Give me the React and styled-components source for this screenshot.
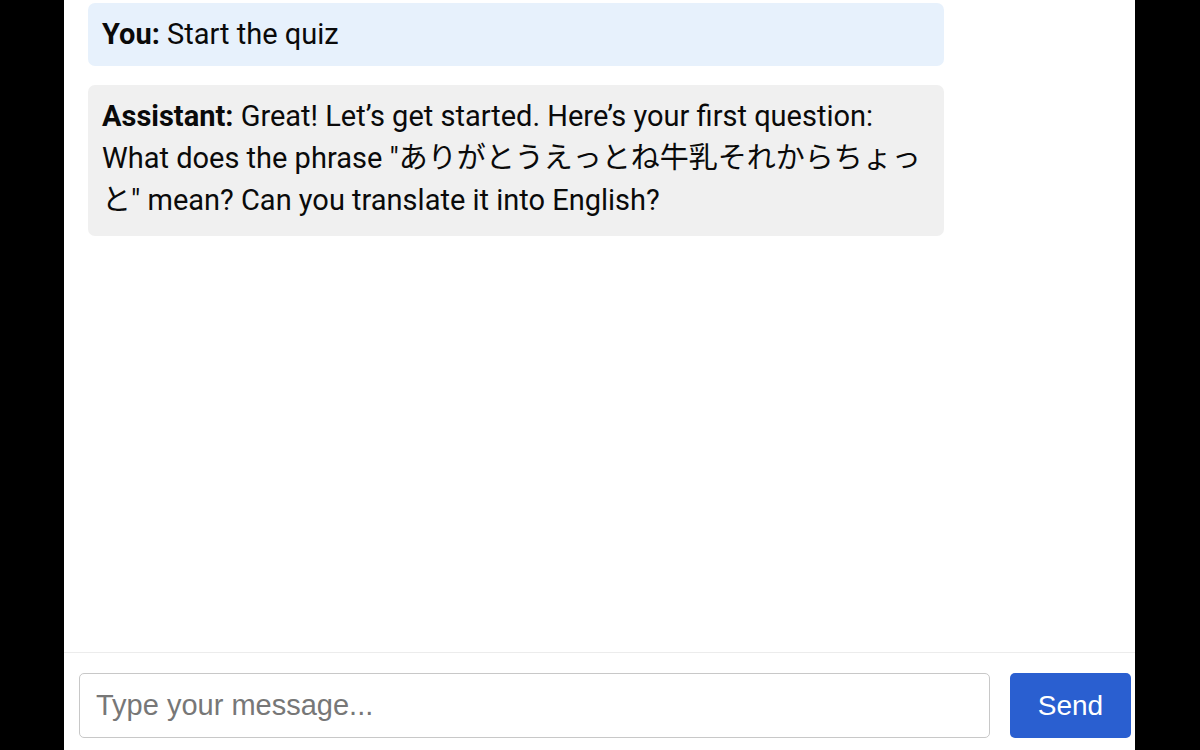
import React, { useState } from "react";
import styled, { createGlobalStyle } from "styled-components";

const GlobalStyle = createGlobalStyle`
  html, body {
    margin: 0;
    padding: 0;
    background: #000;
  }
  * { box-sizing: border-box; }
`;

const Page = styled.div`
  width: 1200px;
  height: 750px;
  display: flex;
  justify-content: flex-start;
  padding-left: 64px;
  overflow: hidden;
`;

const ChatPanel = styled.div`
  width: 1071px;
  height: 750px;
  background: #fff;
  display: flex;
  flex-direction: column;
`;

const Messages = styled.div`
  flex: 1;
  padding: 3px 24px 0;
  display: flex;
  flex-direction: column;
  gap: 19px;
  overflow: hidden;
`;

const Bubble = styled.div`
  width: 856px;
  padding: 10px 14px ${(p) => (p.$role === "user" ? "11px" : "15px")};
  border-radius: 7px;
  background: ${(p) => (p.$role === "user" ? "#e7f1fc" : "#f0f0f0")};
  font-family: Roboto, "Noto Sans CJK JP", sans-serif;
  font-size: 29px;
  line-height: 42px;
  color: #0a0a0a;
`;

const Speaker = styled.strong`
  font-weight: 700;
`;

const InputBar = styled.form`
  display: flex;
  gap: 20px;
  padding: 20px 4px 12px 15px;
  border-top: 1px solid #ececec;
`;

const MessageInput = styled.input`
  flex: 1;
  height: 65px;
  border: 1px solid #c8c8c8;
  border-radius: 5px;
  padding: 0 16px;
  font-family: "Liberation Sans", Arial, sans-serif;
  font-size: 29px;
  color: #222;
  outline: none;
  &::placeholder {
    color: #777;
  }
`;

const SendButton = styled.button`
  width: 121px;
  height: 65px;
  border: none;
  border-radius: 5px;
  background: #2a5fd0;
  color: #fff;
  font-family: "Liberation Sans", Arial, sans-serif;
  font-size: 28px;
  cursor: pointer;
`;

const initialMessages = [
  { role: "user", text: "Start the quiz" },
  {
    role: "assistant",
    text:
      "Great! Let’s get started. Here’s your first question: What does the phrase \"ありがとうえっとね牛乳それからちょっと\" mean? Can you translate it into English?",
  },
];

export default function App() {
  const [messages] = useState(initialMessages);
  const [draft, setDraft] = useState("");

  return (
    <>
      <GlobalStyle />
      <Page>
        <ChatPanel>
          <Messages>
            {messages.map((m, i) => (
              <Bubble key={i} $role={m.role}>
                <Speaker>{m.role === "user" ? "You:" : "Assistant:"}</Speaker>{" "}
                {m.text}
              </Bubble>
            ))}
          </Messages>
          <InputBar onSubmit={(e) => e.preventDefault()}>
            <MessageInput
              placeholder="Type your message..."
              value={draft}
              onChange={(e) => setDraft(e.target.value)}
            />
            <SendButton type="submit">Send</SendButton>
          </InputBar>
        </ChatPanel>
      </Page>
    </>
  );
}
